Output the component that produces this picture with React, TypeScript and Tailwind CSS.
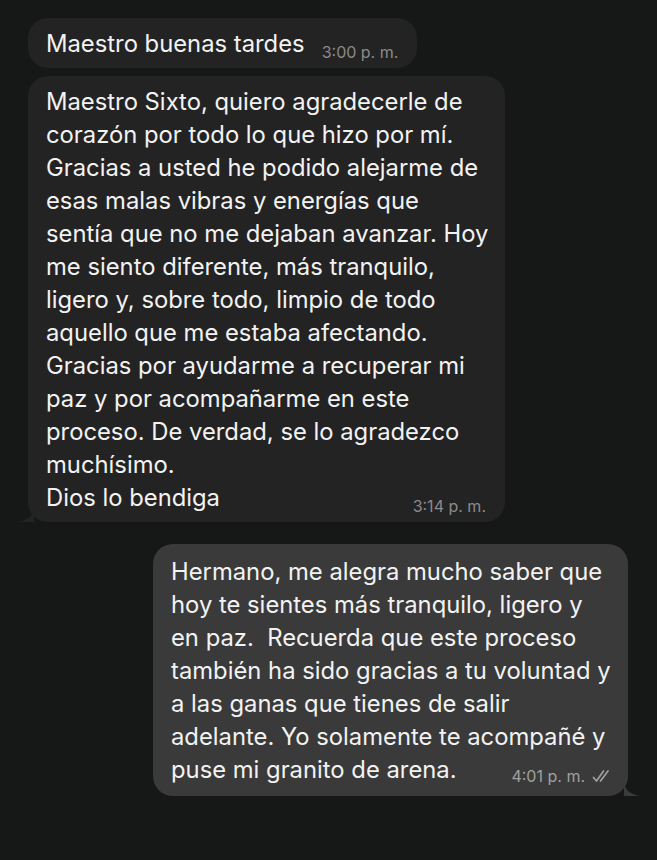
import React from "react";

type Msg = {
  lines: string[];
  time: string;
  mine?: boolean;
};

const messages: Msg[] = [
  { lines: ["Maestro buenas tardes"], time: "3:00 p. m." },
  {
    lines: [
      "Maestro Sixto, quiero agradecerle de",
      "corazón por todo lo que hizo por mí.",
      "Gracias a usted he podido alejarme de",
      "esas malas vibras y energías que",
      "sentía que no me dejaban avanzar. Hoy",
      "me siento diferente, más tranquilo,",
      "ligero y, sobre todo, limpio de todo",
      "aquello que me estaba afectando.",
      "Gracias por ayudarme a recuperar mi",
      "paz y por acompañarme en este",
      "proceso. De verdad, se lo agradezco",
      "muchísimo.",
      "Dios lo bendiga",
    ],
    time: "3:14 p. m.",
  },
  {
    lines: [
      "Hermano, me alegra mucho saber que",
      "hoy te sientes más tranquilo, ligero y",
      "en paz.  Recuerda que este proceso",
      "también ha sido gracias a tu voluntad y",
      "a las ganas que tienes de salir",
      "adelante. Yo solamente te acompañé y",
      "puse mi granito de arena.",
    ],
    time: "4:01 p. m.",
    mine: true,
  },
];

// doble check, leído
function Checks() {
  return (
    <svg width="20" height="14" viewBox="0 0 20 14" fill="none" className="ml-[7px]">
      <path d="M1.5 8.5 L4.5 12 L11.5 2" stroke="#a0a0a0" strokeWidth="1.7" strokeLinecap="round" strokeLinejoin="round" />
      <path d="M8.5 12 L16 2" stroke="#a0a0a0" strokeWidth="1.7" strokeLinecap="round" />
    </svg>
  );
}

function Time({ time, mine }: { time: string; mine?: boolean }) {
  return (
    <span
      className={`flex items-center text-[16px] leading-none whitespace-nowrap ${
        mine ? "text-[#a0a0a0] translate-y-[6px]" : "text-[#8a8a8a] translate-y-[8px]"
      }`}
    >
      {time}
      {mine && <Checks />}
    </span>
  );
}

function Bubble({ msg, tail, width, short }: { msg: Msg; tail?: boolean; width?: string; short?: boolean }) {
  const last = msg.lines[msg.lines.length - 1];
  const rest = msg.lines.slice(0, -1);
  return (
    <div
      className={`relative rounded-[20px] ${
        msg.mine ? "bg-[#3a3a3a] pl-[18px] pr-[16px] pt-[11px] pb-[10px]" : "bg-[#232323] pl-[18px] pr-[19px] pt-[9px] pb-[8px]"
      } ${width ?? ""} text-[#f2f2f2] text-[23.8px] leading-[33px]`}
    >
      {rest.map((l, i) => (
        <div key={i} className="whitespace-pre">
          {l}
        </div>
      ))}
      <div className={`flex items-center whitespace-pre ${short ? "gap-[17px]" : "justify-between"}`}>
        <span>{last}</span>
        <Time time={msg.time} mine={msg.mine} />
      </div>
      {tail && !msg.mine && (
        <svg width="16" height="16" viewBox="0 0 16 16" className="absolute left-[-10px] bottom-0">
          <path d="M16 0 C16 8 12 14 0 16 L16 16 Z" fill="#232323" />
        </svg>
      )}
      {tail && msg.mine && (
        <svg width="16" height="16" viewBox="0 0 16 16" className="absolute right-[-12px] bottom-0">
          <path d="M0 0 C0 8 4 14 16 16 L0 16 Z" fill="#3a3a3a" />
        </svg>
      )}
    </div>
  );
}

export default function App() {
  return (
    <div
      className="w-[657px] h-[860px] bg-[#161717] pt-[18px] flex flex-col"
      style={{ fontFamily: "Inter, 'Noto Sans', sans-serif" }}
    >
      <div className="pl-[28px] flex flex-col items-start gap-[8px]">
        <Bubble msg={messages[0]} short />
        <Bubble msg={messages[1]} tail width="w-[477px]" />
      </div>
      <div className="flex justify-end pr-[29px] mt-[22px]">
        <Bubble msg={messages[2]} tail width="w-[475px]" />
      </div>
    </div>
  );
}
